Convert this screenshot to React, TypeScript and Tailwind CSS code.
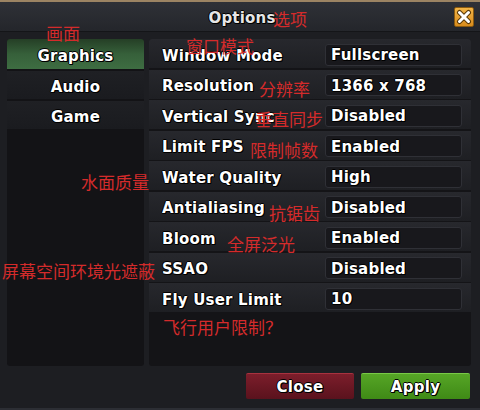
import React from 'react';

const tabs = [
  { name: 'Graphics', active: true },
  { name: 'Audio', active: false },
  { name: 'Game', active: false },
];

const rows = [
  { label: 'Window Mode', value: 'Fullscreen' },
  { label: 'Resolution', value: '1366 x 768' },
  { label: 'Vertical Sync', value: 'Disabled' },
  { label: 'Limit FPS', value: 'Enabled' },
  { label: 'Water Quality', value: 'High' },
  { label: 'Antialiasing', value: 'Disabled' },
  { label: 'Bloom', value: 'Enabled' },
  { label: 'SSAO', value: 'Disabled' },
  { label: 'Fly User Limit', value: '10' },
];

// red translation notes laid over the screenshot
const notes = [
  { text: '画面', cls: 'left-[46px] top-[20px]' },
  { text: '选项', cls: 'left-[273px] top-[6px]' },
  { text: '窗口模式', cls: 'left-[186px] top-[33px]' },
  { text: '分辨率', cls: 'left-[259px] top-[76px]' },
  { text: '垂直同步', cls: 'left-[255px] top-[106px]' },
  { text: '限制帧数', cls: 'left-[250px] top-[137px]' },
  { text: '水面质量', cls: 'left-[81px] top-[169px]' },
  { text: '抗锯齿', cls: 'left-[269px] top-[200px]' },
  { text: '全屏泛光', cls: 'left-[227px] top-[231px]' },
  { text: '屏幕空间环境光遮蔽', cls: 'left-[2px] top-[258px]' },
  { text: '飞行用户限制？', cls: 'left-[163px] top-[314px]' },
];

const outline = '[text-shadow:1px_1px_0_#000,-1px_0_0_#000,0_-1px_0_#000,1px_0_0_#000,0_1px_0_#000]';

export default function App() {
  return (
    <div
      className="relative w-[480px] h-[410px] overflow-hidden bg-[#1d1e22] border-t-2 border-[#9c8463] flex flex-col"
      style={{ fontFamily: '"DejaVu Sans", "Noto Sans CJK SC", sans-serif' }}
    >
      {/* Title bar */}
      <div className="relative h-[30px] shrink-0 flex items-center justify-center pt-[3px] bg-gradient-to-b from-[#2f3137] to-[#24262b] border-b border-[#141518]">
        <span className={`text-[15px] font-bold tracking-[0.2px] text-[#e6e6e6] pl-[4px] ${outline}`}>Options</span>
        <button className="absolute right-[6px] top-[5px] w-[20px] h-[20px] rounded-[2px] bg-gradient-to-b from-[#f2b446] to-[#d98d1c] border border-[#8a5a10] flex items-center justify-center">
          <svg width="16" height="16" viewBox="0 0 16 16">
            <path d="M3.5 3.5 L12.5 12.5 M12.5 3.5 L3.5 12.5" stroke="#5a3a08" strokeWidth="5" strokeLinecap="round" />
            <path d="M3.5 3.5 L12.5 12.5 M12.5 3.5 L3.5 12.5" stroke="#ffffff" strokeWidth="3" strokeLinecap="round" />
          </svg>
        </button>
      </div>

      {/* Body */}
      <div className="flex gap-[5px] px-[7px] pt-[7px] h-[334px] shrink-0">
        {/* Tabs */}
        <div className="w-[137px] h-[327px] bg-[#131316] rounded-[3px] flex flex-col gap-[2px] overflow-hidden">
          {tabs.map((t) => (
            <div
              key={t.name}
              className={`flex items-center justify-center pt-[5px] text-[15px] font-bold tracking-[0.2px] text-white ${outline} ${
                t.active
                  ? 'h-[30px] bg-gradient-to-b from-[#253f26] via-[#36603a] to-[#3e6d42]'
                  : 'h-[28px] bg-gradient-to-b from-[#1f2024] to-[#1a1b1f]'
              }`}
            >
              {t.name}
            </div>
          ))}
        </div>

        {/* Settings */}
        <div className="w-[322px] h-[327px] bg-[#141417] rounded-[3px] flex flex-col gap-[1.5px] overflow-hidden">
          {rows.map((r) => (
            <div
              key={r.label}
              className="h-[29px] shrink-0 flex items-center pl-[13px] pr-[9px] bg-gradient-to-b from-[#27282d] to-[#1e1f23]"
            >
              <span className={`flex-1 pt-[5px] text-[15px] font-bold tracking-[0.2px] text-white ${outline}`}>{r.label}</span>
              <div className={`w-[137px] h-[22px] mt-[2px] flex items-center pl-[5px] pt-[2px] bg-[#18181c] border border-[#2f3036] rounded-[3px] text-[15px] font-bold tracking-[0.2px] text-white ${outline}`}>
                {r.value}
              </div>
            </div>
          ))}
        </div>
      </div>

      {/* Footer */}
      <div className="flex justify-end gap-[7px] pr-[10px] pt-[7px]">
        <button className={`w-[108px] h-[26px] pt-[2px] rounded-[2px] border-t border-[#a8323f] bg-gradient-to-b from-[#7c1e2b] to-[#5a121d] text-[15px] font-bold tracking-[0.3px] text-white ${outline}`}>
          Close
        </button>
        <button className={`w-[109px] h-[26px] pt-[2px] rounded-[2px] border-t border-[#78c947] bg-gradient-to-b from-[#56a526] to-[#3f8a16] text-[15px] font-bold tracking-[0.3px] text-white ${outline}`}>
          Apply
        </button>
      </div>
      <div className="absolute left-0 right-0 bottom-0 h-[2px] bg-[#2c2e34]" />

      {notes.map((n) => (
        <span
          key={n.text}
          className={`absolute ${n.cls} text-[17px] leading-[22px] text-[#d42b2b] whitespace-nowrap`}
          style={{ fontFamily: '"Noto Sans CJK SC", sans-serif' }}
        >
          {n.text}
        </span>
      ))}
    </div>
  );
}
